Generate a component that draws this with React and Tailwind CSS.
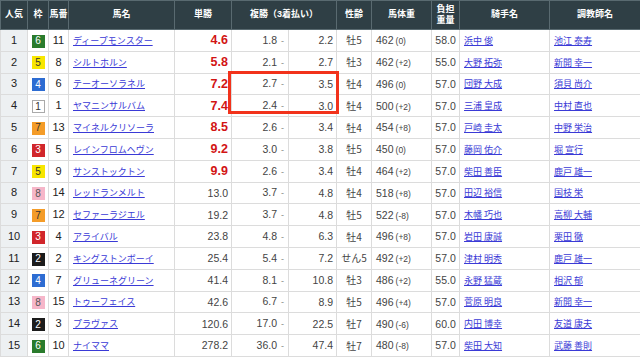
import React from 'react'

const rows = [
  [1, 6, 11, 'ディープモンスター', '4.6', '1.8', '2.2', '牡5', '462', '(0)', '58.0', '浜中 俊', '池江 泰寿'],
  [2, 5, 8, 'シルトホルン', '5.8', '2.1', '2.7', '牡3', '462', '(+2)', '55.0', '大野 拓弥', '新開 幸一'],
  [3, 4, 6, 'テーオーソラネル', '7.2', '2.7', '3.5', '牡4', '496', '(0)', '57.0', '団野 大成', '須貝 尚介'],
  [4, 1, 1, 'ヤマニンサルバム', '7.4', '2.4', '3.0', '牡4', '500', '(+2)', '57.0', '三浦 皇成', '中村 直也'],
  [5, 7, 13, 'マイネルクリソーラ', '8.5', '2.6', '3.4', '牡4', '454', '(+8)', '57.0', '戸崎 圭太', '中野 栄治'],
  [6, 3, 5, 'レインフロムヘヴン', '9.2', '3.0', '3.8', '牡5', '450', '(0)', '57.0', '藤岡 佑介', '堀 宣行'],
  [7, 5, 9, 'サンストックトン', '9.9', '2.6', '3.4', '牡4', '464', '(+2)', '57.0', '柴田 善臣', '鹿戸 雄一'],
  [8, 8, 14, 'レッドランメルト', '13.0', '3.7', '4.8', '牡4', '518', '(+8)', '57.0', '田辺 裕信', '国枝 栄'],
  [9, 7, 12, 'セファーラジエル', '19.2', '3.7', '4.8', '牡5', '522', '(-8)', '57.0', '木幡 巧也', '高柳 大輔'],
  [10, 3, 4, 'アライバル', '23.8', '4.8', '6.3', '牡4', '496', '(+8)', '57.0', '岩田 康誠', '栗田 徹'],
  [11, 2, 2, 'キングストンボーイ', '25.4', '5.4', '7.2', 'せん5', '492', '(+2)', '57.0', '津村 明秀', '鹿戸 雄一'],
  [12, 4, 7, 'グリューネグリーン', '41.4', '8.1', '10.8', '牡3', '486', '(+2)', '55.0', '永野 猛蔵', '相沢 郁'],
  [13, 8, 15, 'トゥーフェイス', '42.6', '6.7', '8.9', '牡5', '496', '(+4)', '57.0', '菅原 明良', '新開 幸一'],
  [14, 2, 3, 'プラヴァス', '120.6', '17.0', '22.5', '牡7', '490', '(-6)', '60.0', '内田 博幸', '友道 康夫'],
  [15, 6, 10, 'ナイママ', '278.2', '36.0', '47.4', '牡7', '480', '(-8)', '57.0', '柴田 大知', '武藤 善則'],
]

const wakuStyle = {
  1: 'bg-white text-[#333] border border-[#aaa]',
  2: 'bg-[#1c1c1c] text-white',
  3: 'bg-[#d1262b] text-white',
  4: 'bg-[#2d6cd2] text-white',
  5: 'bg-[#f8e600] text-[#333]',
  6: 'bg-[#2a7b2c] text-white',
  7: 'bg-[#f49c28] text-[#333]',
  8: 'bg-[#f6b6c9] text-[#555]',
}

const th = 'bg-[#2f3f45] text-white font-bold text-[9px] border border-[#596a70] text-center p-0'
const td = 'h-[21.8px] p-0 border border-[#dcdcdc] leading-none'

export default function App() {
  return (
    <div className="relative w-[640px] h-[357px] overflow-hidden bg-white font-['Liberation_Sans','Noto_Sans_CJK_JP',sans-serif] text-[#333]">
      <table className="table-fixed w-[640px] border-collapse">
        <colgroup>
          <col className="w-[27px]" />
          <col className="w-[21px]" />
          <col className="w-[20px]" />
          <col className="w-[106px]" />
          <col className="w-[57px]" />
          <col className="w-[57px]" />
          <col className="w-[48px]" />
          <col className="w-[35px]" />
          <col className="w-[60px]" />
          <col className="w-[28px]" />
          <col className="w-[90px]" />
          <col className="w-[91px]" />
        </colgroup>
        <thead>
          <tr className="h-[29px]">
            <th className={th}>人気</th>
            <th className={th}>枠</th>
            <th className={th}>馬番</th>
            <th className={th}>馬名</th>
            <th className={th}>単勝</th>
            <th className={th} colSpan={2}>複勝（3着払い）</th>
            <th className={th}>性齢</th>
            <th className={th}>馬体重</th>
            <th className={`${th} leading-[11px]`}>負担<br />重量</th>
            <th className={th}>騎手名</th>
            <th className={th}>調教師名</th>
          </tr>
        </thead>
        <tbody>
          {rows.map(r => {
            const [pop, waku, num, name, win, pMin, pMax, sex, wt, diff, kg, jockey, trainer] = r
            const fav = parseFloat(win) < 10
            return (
              <tr key={pop}>
                <td className={`${td} bg-[#edf0f2] text-center text-[11px] text-[#222]`}>{pop}</td>
                <td className={`${td} text-center`}>
                  <span className={`inline-flex items-center justify-center w-[13px] h-[13px] text-[10px] align-middle ${wakuStyle[waku]}`}>{waku}</span>
                </td>
                <td className={`${td} text-center text-[11px] text-[#222]`}>{num}</td>
                <td className={`${td} pl-[4px] text-[9px] font-['Noto_Sans_CJK_JP',sans-serif]`}>
                  <a className="text-[#3a3ad6] underline underline-offset-1">{name}</a>
                </td>
                <td className={`${td} text-right pr-[3px] ${fav ? 'text-[12.5px] font-bold text-[#d21414]' : 'text-[10.5px] text-[#444]'}`}>{win}</td>
                <td className={`${td} border-r-[#dcdcdc] border-r-dotted text-right pr-[4px] text-[10.5px] text-[#444]`}>
                  {pMin}<span className="ml-[4px] text-[9px] text-[#888]">-</span>
                </td>
                <td className={`${td} text-right pr-[3px] text-[10.5px] text-[#444]`}>{pMax}</td>
                <td className={`${td} text-center text-[10px] text-[#444] font-['Noto_Sans_CJK_JP',sans-serif]`}>{sex}</td>
                <td className={`${td} pl-[4px] text-[10.5px] text-[#444]`}>
                  {wt}<span className="ml-[2px] text-[8.5px]">{diff}</span>
                </td>
                <td className={`${td} text-center text-[10.5px] text-[#444]`}>{kg}</td>
                <td className={`${td} pl-[4px] text-[9px] font-['Noto_Sans_CJK_JP',sans-serif]`}>
                  <a className="text-[#3a3ad6] underline underline-offset-1">{jockey}</a>
                </td>
                <td className={`${td} pl-[4px] text-[9px] font-['Noto_Sans_CJK_JP',sans-serif]`}>
                  <a className="text-[#3a3ad6] underline underline-offset-1">{trainer}</a>
                </td>
              </tr>
            )
          })}
        </tbody>
      </table>
      <div className="absolute left-[228px] top-[71px] w-[111px] h-[43px] border-[3px] border-[#f2321b]" />
    </div>
  )
}
